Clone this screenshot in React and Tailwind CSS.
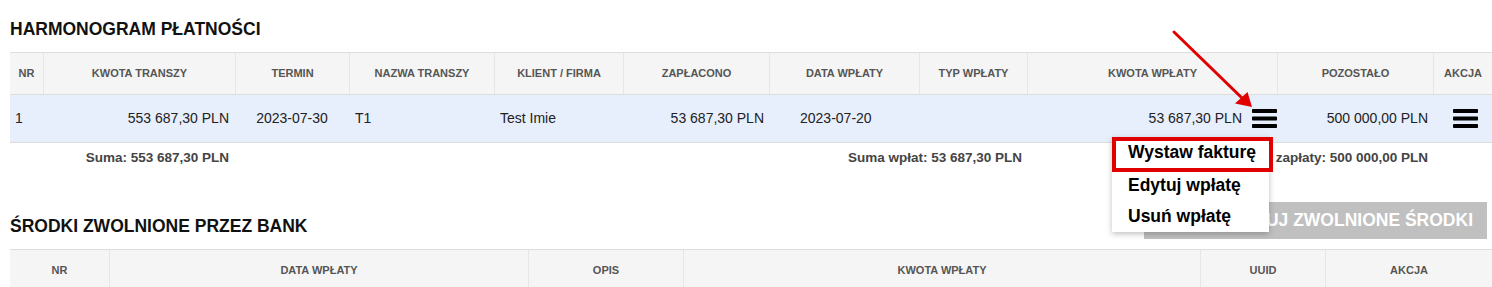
import React from "react";

const COLS1 =
  "grid grid-cols-[33px_192px_114px_145px_129px_146px_150px_108px_250px_156px_59px]";
const COLS2 = "grid grid-cols-[99px_419px_155px_517px_125px_167px]";

const headers1 = [
  "NR",
  "KWOTA TRANSZY",
  "TERMIN",
  "NAZWA TRANSZY",
  "KLIENT / FIRMA",
  "ZAPŁACONO",
  "DATA WPŁATY",
  "TYP WPŁATY",
  "KWOTA WPŁATY",
  "POZOSTAŁO",
  "AKCJA",
];

const headers2 = ["NR", "DATA WPŁATY", "OPIS", "KWOTA WPŁATY", "UUID", "AKCJA"];

function Bars() {
  return (
    <svg width="25" height="19" viewBox="0 0 25 19" className="block shrink-0">
      <rect x="0" y="0" width="25" height="4" rx="0.8" fill="#000" />
      <rect x="0" y="7.5" width="25" height="4" rx="0.8" fill="#000" />
      <rect x="0" y="15" width="25" height="4" rx="0.8" fill="#000" />
    </svg>
  );
}

function HeaderRow({ cols, items, height }) {
  return (
    <div className={`${cols} ${height} bg-[#f5f5f5] border-y border-[#dddddd]`}>
      {items.map((h, i) => (
        <div
          key={h + i}
          className={`flex items-center justify-center text-[11px] font-bold text-[#555] whitespace-nowrap ${
            i > 0 ? "border-l border-[#e6e6e6]" : ""
          }`}
        >
          {h}
        </div>
      ))}
    </div>
  );
}

export default function App() {
  return (
    <div className="relative w-[1492px] h-[287px] overflow-hidden bg-white pl-[10px] font-['Liberation_Sans',Arial,sans-serif]">
      {/* Section 1 title */}
      <div className="h-[52px] pt-[19px]">
        <h2 className="text-[17.5px] leading-[20px] font-bold text-[#111]">
          HARMONOGRAM PŁATNOŚCI
        </h2>
      </div>

      {/* Table 1 */}
      <HeaderRow cols={COLS1} items={headers1} height="h-[43px]" />
      <div
        className={`${COLS1} h-[48px] bg-[#e7eefc] border-b border-[#dddddd] text-[14px] text-[#222] whitespace-nowrap`}
      >
        <div className="flex items-center pl-[5px]">1</div>
        <div className="flex items-center justify-end pr-[6px]">553 687,30 PLN</div>
        <div className="flex items-center justify-center">2023-07-30</div>
        <div className="flex items-center pl-[6px]">T1</div>
        <div className="flex items-center pl-[6px]">Test Imie</div>
        <div className="flex items-center justify-end pr-[5px]">53 687,30 PLN</div>
        <div className="flex items-center pl-[31px]">2023-07-20</div>
        <div />
        <div className="flex items-center justify-end gap-[10px]">
          <span>53 687,30 PLN</span>
          <Bars />
        </div>
        <div className="flex items-center justify-end pr-[5px]">500 000,00 PLN</div>
        <div className="flex items-center pl-[20px]">
          <Bars />
        </div>
      </div>

      {/* Summary row */}
      <div
        className={`${COLS1} h-[30px] text-[13.5px] font-bold text-[#444] whitespace-nowrap`}
      >
        <div />
        <div className="flex items-center justify-end pr-[6px]">Suma: 553 687,30 PLN</div>
        <div />
        <div />
        <div />
        <div />
        <div />
        <div className="flex items-center justify-end pr-[5px]">Suma wpłat: 53 687,30 PLN</div>
        <div />
        <div className="flex items-center justify-end pr-[5px]">
          Pozostało do zapłaty: 500 000,00 PLN
        </div>
        <div />
      </div>

      {/* Section 2 header */}
      <div className="mt-[29px] flex items-start justify-between">
        <h2 className="mt-[14px] text-[17.5px] leading-[20px] font-bold text-[#111]">
          ŚRODKI ZWOLNIONE PRZEZ BANK
        </h2>
        <button className="mr-[5px] flex h-[37px] w-[343px] items-center justify-end bg-[#c0c0c0] pr-[14px] text-[17.5px] font-bold text-white whitespace-nowrap">
          ZAREJESTRUJ ZWOLNIONE ŚRODKI
        </button>
      </div>

      {/* Table 2 */}
      <div className="mt-[10px]">
        <HeaderRow cols={COLS2} items={headers2} height="h-[43px]" />
      </div>

      {/* Dropdown menu */}
      <div className="absolute left-[1112px] top-[137px] z-10 w-[157px] h-[95px] bg-white shadow-[0_2px_6px_rgba(0,0,0,0.25)] text-[17.5px] leading-[20px] font-bold text-black whitespace-nowrap">
        <div className="pl-[16px] pt-[5px]">Wystaw fakturę</div>
        <div className="pl-[16px] mt-[13px]">Edytuj wpłatę</div>
        <div className="pl-[16px] mt-[11px]">Usuń wpłatę</div>
      </div>

      {/* Red highlight box */}
      <div className="absolute left-[1112px] top-[137px] z-20 w-[161px] h-[35px] border-[4px] border-[#e00000]" />

      {/* Red arrow */}
      <svg
        className="absolute left-[1160px] top-[25px] z-20"
        width="100"
        height="90"
        viewBox="0 0 100 90"
      >
        <line x1="14" y1="7" x2="82" y2="73" stroke="#e00000" strokeWidth="3" strokeLinecap="round" />
        <polygon points="92,82 75,78.5 87.5,67" fill="#e00000" />
      </svg>
    </div>
  );
}
